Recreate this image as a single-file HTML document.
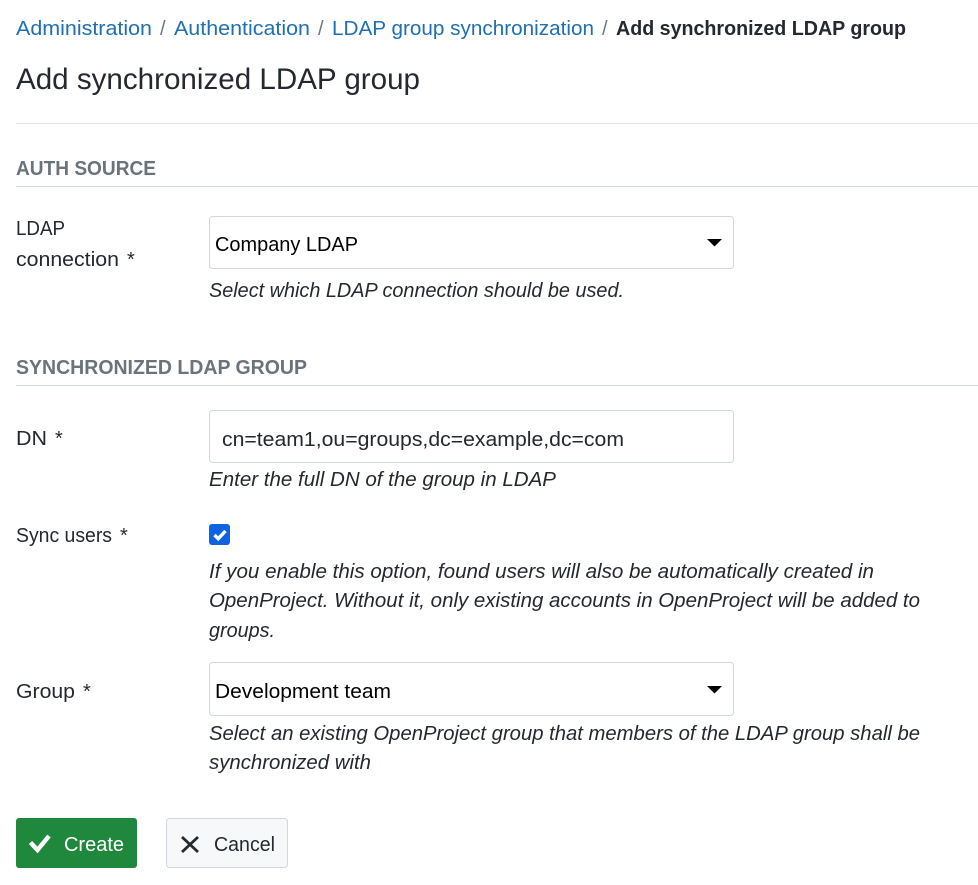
<!DOCTYPE html>
<html lang="en"><head><meta charset="utf-8"><title>Add synchronized LDAP group</title>
<style>
html,body{margin:0;padding:0;background:#fff;width:978px;height:885px;overflow:hidden}
svg{display:block}
text{font-family:"Liberation Sans",sans-serif;font-size:20px;fill:#24292f;white-space:pre}
.l{fill:#1f6fb2}.s{fill:#6e7781}
.h{font-size:20px;font-weight:bold;fill:#6a727b}
.i{font-style:italic}
</style></head><body>
<svg width="978" height="885" viewBox="0 0 978 885" xmlns="http://www.w3.org/2000/svg">
<text class="l" x="16" y="35" textLength="136" lengthAdjust="spacingAndGlyphs">Administration</text>
<text class="s" x="160" y="35">/</text>
<text class="l" x="174" y="35" textLength="136" lengthAdjust="spacingAndGlyphs">Authentication</text>
<text class="s" x="318" y="35">/</text>
<text class="l" x="332" y="35" textLength="262" lengthAdjust="spacingAndGlyphs">LDAP group synchronization</text>
<text class="s" x="602" y="35">/</text>
<text x="616" y="35" style="font-weight:bold" textLength="290" lengthAdjust="spacingAndGlyphs">Add synchronized LDAP group</text>
<text x="16" y="89" style="font-size:30px" textLength="404" lengthAdjust="spacingAndGlyphs">Add synchronized LDAP group</text>
<rect x="16" y="123" width="962" height="1" fill="#e1e4e8"/>
<text class="h" x="16" y="175" textLength="140" lengthAdjust="spacingAndGlyphs">AUTH SOURCE</text>
<rect x="16" y="186" width="962" height="1" fill="#d0d7de"/>
<text x="16" y="235" textLength="49" lengthAdjust="spacingAndGlyphs">LDAP</text>
<text x="16" y="266" textLength="103" lengthAdjust="spacingAndGlyphs">connection</text>
<text x="127" y="266">*</text>
<rect x="209.5" y="216.5" width="524" height="52" rx="3" fill="#fff" stroke="#d0d7de"/>
<text x="215" y="251" style="fill:#000" textLength="143" lengthAdjust="spacingAndGlyphs">Company LDAP</text>
<path d="M707 239h15l-7.500 7.500z" fill="#000"/>
<text class="i" x="209" y="297" textLength="415" lengthAdjust="spacingAndGlyphs">Select which LDAP connection should be used.</text>
<text class="h" x="16" y="374" textLength="291" lengthAdjust="spacingAndGlyphs">SYNCHRONIZED LDAP GROUP</text>
<rect x="16" y="385" width="962" height="1" fill="#d0d7de"/>
<text x="16" y="445" textLength="31" lengthAdjust="spacingAndGlyphs">DN</text>
<text x="55" y="445">*</text>
<rect x="209.5" y="410.500" width="524" height="52" rx="3" fill="#fff" stroke="#d0d7de"/>
<text x="222" y="446" textLength="402" lengthAdjust="spacingAndGlyphs">cn=team1,ou=groups,dc=example,dc=com</text>
<text class="i" x="209" y="486" textLength="347" lengthAdjust="spacingAndGlyphs">Enter the full DN of the group in LDAP</text>
<text x="16" y="542" textLength="96" lengthAdjust="spacingAndGlyphs">Sync users</text>
<text x="120" y="542">*</text>
<rect x="209" y="524" width="21" height="21" rx="3" fill="#0f62e0"/>
<path d="M214.500 535l3.700 3.700 7.300-7.700" fill="none" stroke="#fff" stroke-width="3.400"/>
<text class="i" x="209" y="578" textLength="665" lengthAdjust="spacingAndGlyphs">If you enable this option, found users will also be automatically created in</text>
<text class="i" x="209" y="607" textLength="711" lengthAdjust="spacingAndGlyphs">OpenProject. Without it, only existing accounts in OpenProject will be added to</text>
<text class="i" x="209" y="637" textLength="66" lengthAdjust="spacingAndGlyphs">groups.</text>
<text x="16" y="698" textLength="59" lengthAdjust="spacingAndGlyphs">Group</text>
<text x="83" y="698">*</text>
<rect x="209.5" y="662.500" width="524" height="53" rx="3" fill="#fff" stroke="#d0d7de"/>
<text x="215" y="698" style="fill:#000" textLength="176" lengthAdjust="spacingAndGlyphs">Development team</text>
<path d="M707 686h15l-7.500 7.500z" fill="#000"/>
<text class="i" x="209" y="740" textLength="711" lengthAdjust="spacingAndGlyphs">Select an existing OpenProject group that members of the LDAP group shall be</text>
<text class="i" x="209" y="769" textLength="162" lengthAdjust="spacingAndGlyphs">synchronized with</text>
<rect x="16" y="818" width="121" height="50" rx="3" fill="#1f883d"/>
<path d="M30.500 842.500l7 7.500L49 836" fill="none" stroke="#fff" stroke-width="4.500"/>
<text x="64" y="851" style="fill:#fff" textLength="60" lengthAdjust="spacingAndGlyphs">Create</text>
<rect x="166.500" y="818.500" width="121" height="49" rx="3" fill="#f6f8fa" stroke="#d0d7de"/>
<path d="M182 837l16 15M198 837l-16 15" fill="none" stroke="#24292f" stroke-width="2.800"/>
<text x="214" y="851" textLength="61" lengthAdjust="spacingAndGlyphs">Cancel</text>
</svg>
</body></html>
